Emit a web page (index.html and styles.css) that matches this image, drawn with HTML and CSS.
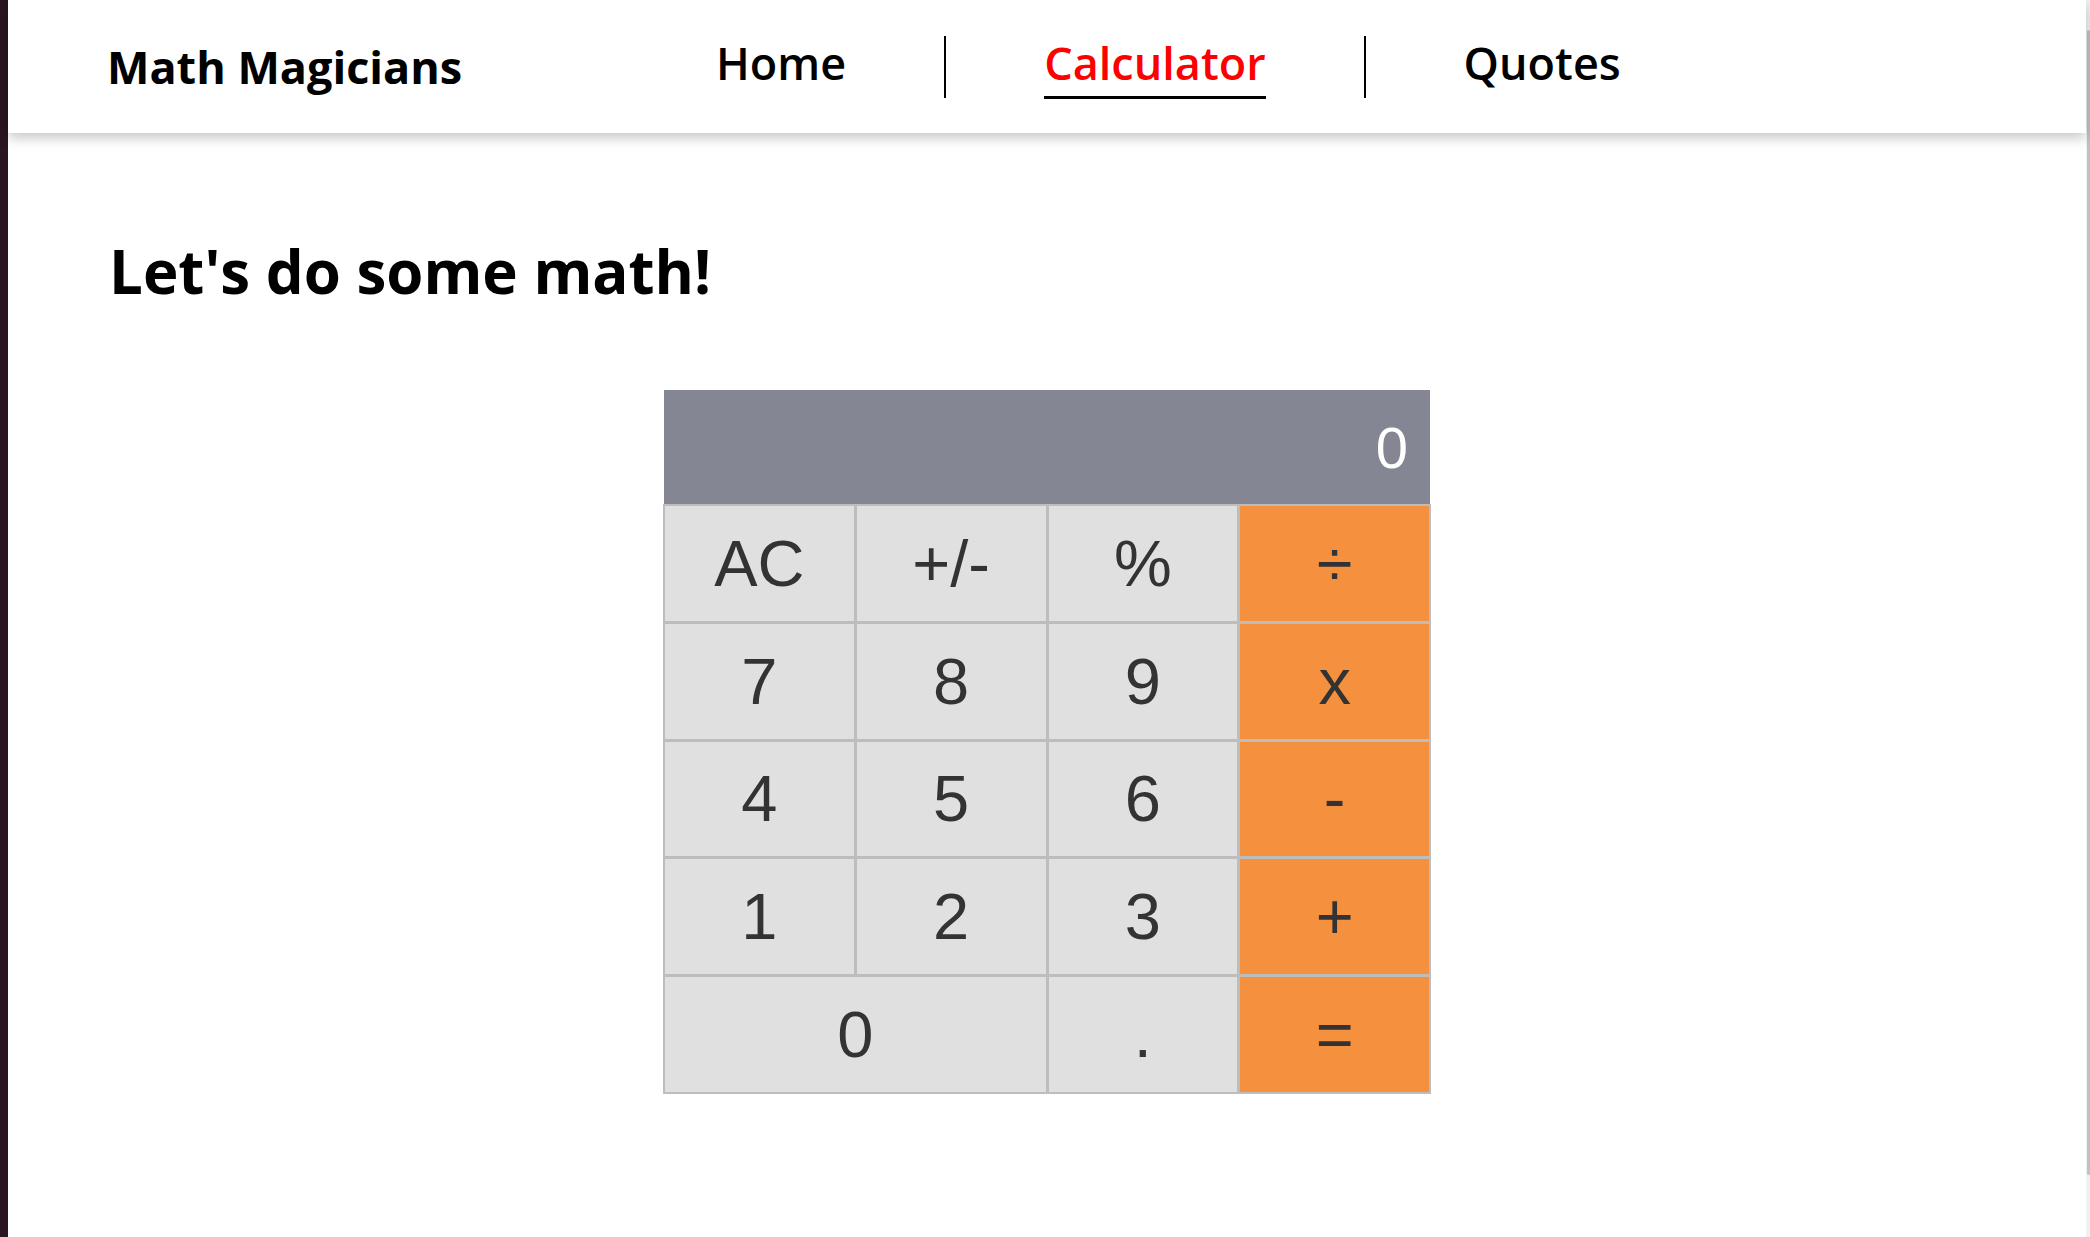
FILE: index.html
```html
<!DOCTYPE html>
<html lang="en">
<head>
<meta charset="utf-8">
<title>Math Magicians</title>
<link rel="stylesheet" href="styles.css">
</head>
<body>
<div class="screen">
  <div class="desktop-edge"></div>
  <div class="page">
    <header class="site-header">
      <h2 class="logo">Math Magicians</h2>
      <nav class="nav">
        <ul class="nav-list">
          <li class="nav-item"><a class="nav-link" href="#">Home</a></li>
          <li class="nav-item"><a class="nav-link active" href="#">Calculator</a></li>
          <li class="nav-item"><a class="nav-link" href="#">Quotes</a></li>
        </ul>
      </nav>
    </header>
    <main class="content">
      <h1 class="title">Let's do some math!</h1>
      <div class="calculator">
        <div class="display">0</div>
        <div class="keys">
          <button class="key">AC</button>
          <button class="key">+/-</button>
          <button class="key">%</button>
          <button class="key op">÷</button>
          <button class="key">7</button>
          <button class="key">8</button>
          <button class="key">9</button>
          <button class="key op">x</button>
          <button class="key">4</button>
          <button class="key">5</button>
          <button class="key">6</button>
          <button class="key op">-</button>
          <button class="key">1</button>
          <button class="key">2</button>
          <button class="key">3</button>
          <button class="key op">+</button>
          <button class="key zero">0</button>
          <button class="key">.</button>
          <button class="key op">=</button>
        </div>
      </div>
    </main>
  </div>
  <div class="scrollbar"><div class="thumb"></div></div>
</div>
</body>
</html>
```
FILE: styles.css
```css
html, body {
  margin: 0;
  padding: 0;
  height: 100%;
}

body {
  font-family: "Open Sans", "Noto Sans", sans-serif;
  background: #fff;
  color: #000;
  overflow: hidden;
}

.screen {
  display: flex;
  height: 1237px;
}

.desktop-edge {
  flex: 0 0 8px;
  background: #2a1520;
}

.page {
  flex: 1;
  min-width: 0;
  background: #fff;
}

.scrollbar {
  flex: 0 0 4px;
  background: #f1f1f1;
  display: flex;
  flex-direction: column;
  align-items: flex-end;
}

.thumb {
  width: 3px;
  height: 1145px;
  margin-top: 30px;
  background: #c1c1c1;
  border-radius: 2px;
}

.site-header {
  position: relative;
  z-index: 1;
  height: 133px;
  display: flex;
  align-items: center;
  padding-left: 99px;
  background: #fff;
  box-shadow: 0 5px 12px rgba(0, 0, 0, 0.22);
}

.logo {
  flex: 0 0 511px;
  margin: 0;
  font-size: 45px;
  font-weight: 700;
  line-height: 1;
}

.nav-list {
  display: flex;
  list-style: none;
  margin: 0;
  padding: 0;
}

.nav-item {
  height: 62px;
  padding: 0 98px;
}

.nav-item + .nav-item {
  border-left: 2px solid #000;
}

.nav-link {
  display: inline-block;
  font-size: 45px;
  font-weight: 600;
  line-height: 54px;
  padding-bottom: 6px;
  color: #000;
  text-decoration: none;
  border-bottom: 3px solid transparent;
}

.nav-link.active {
  color: #ff0000;
  border-bottom-color: #000;
}

.content {
  padding-top: 98px;
}

.title {
  margin: 0 0 79px 101px;
  font-size: 60px;
  font-weight: 700;
  line-height: 80px;
}

.calculator {
  width: 766px;
  margin: 0 auto;
}

.display {
  height: 114px;
  box-sizing: border-box;
  display: flex;
  align-items: center;
  justify-content: flex-end;
  padding-right: 22px;
  background: #858693;
  color: #fff;
  font-family: "Liberation Sans", Arial, sans-serif;
  font-size: 58px;
}

.keys {
  display: grid;
  grid-template-columns: repeat(4, 1fr);
  grid-template-rows: repeat(5, 1fr);
  gap: 3px;
  height: 590px;
  box-sizing: border-box;
  margin: 0 -1px;
  border: 2px solid #bdbdbd;
  background: #bdbdbd;
}

.key {
  margin: 0;
  padding: 0;
  border: 0;
  background: #e0e0e0;
  color: #333;
  font-family: "Liberation Sans", Arial, sans-serif;
  font-size: 65px;
}

.key.op {
  background: #f5913e;
}

.key.zero {
  grid-column: span 2;
}
```
